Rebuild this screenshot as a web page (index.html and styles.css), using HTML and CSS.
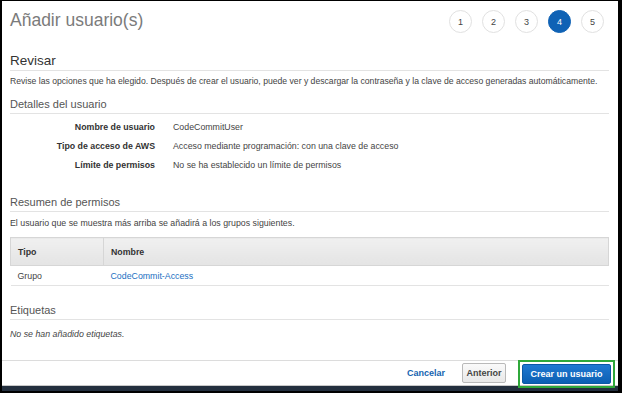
FILE: index.html
```html
<!DOCTYPE html>
<html lang="es">
<head>
<meta charset="utf-8">
<title>Añadir usuario(s)</title>
<link rel="stylesheet" href="styles.css">
</head>
<body>
<div class="window">
  <div class="content">
    <div class="page-header">
      <h1 class="title">Añadir usuario(s)</h1>
      <ol class="steps">
        <li class="step">1</li>
        <li class="step">2</li>
        <li class="step">3</li>
        <li class="step active">4</li>
        <li class="step">5</li>
      </ol>
    </div>

    <h2 class="section-title">Revisar</h2>
    <p class="text intro">Revise las opciones que ha elegido. Después de crear el usuario, puede ver y descargar la contraseña y la clave de acceso generadas automáticamente.</p>

    <h3 class="sub-title first">Detalles del usuario</h3>
    <dl class="details">
      <div class="detail-row"><dt>Nombre de usuario</dt><dd>CodeCommitUser</dd></div>
      <div class="detail-row"><dt>Tipo de acceso de AWS</dt><dd>Acceso mediante programación: con una clave de acceso</dd></div>
      <div class="detail-row"><dt>Límite de permisos</dt><dd>No se ha establecido un límite de permisos</dd></div>
    </dl>

    <h3 class="sub-title perms">Resumen de permisos</h3>
    <p class="text groups-note">El usuario que se muestra más arriba se añadirá a los grupos siguientes.</p>
    <table class="perm-table">
      <thead>
        <tr><th class="col-type">Tipo</th><th>Nombre</th></tr>
      </thead>
      <tbody>
        <tr><td>Grupo</td><td><a class="link" href="#">CodeCommit-Access</a></td></tr>
      </tbody>
    </table>

    <h3 class="sub-title tags">Etiquetas</h3>
    <p class="text empty">No se han añadido etiquetas.</p>
  </div>

  <div class="footer">
    <a class="cancel" href="#">Cancelar</a>
    <button class="btn btn-secondary">Anterior</button>
    <span class="highlight"><button class="btn btn-primary">Crear un usuario</button></span>
  </div>
</div>
<div class="bottom-bar"></div>
</body>
</html>
```

FILE: styles.css
```css
* { box-sizing: border-box; }

html, body {
  margin: 0;
  padding: 0;
  background: #000;
}

body {
  width: 622px;
  height: 393px;
  overflow: hidden;
  font-family: "Liberation Sans", Arial, sans-serif;
  color: #444;
}

.window {
  margin: 1px 4px 0 2px;
  height: 385px;
  background: #fff;
  display: flex;
  flex-direction: column;
  border-bottom: 1px solid #c9c9c9;
}

.content {
  flex: 1;
  padding: 0 9px 0 8px;
}

.page-header {
  height: 51px;
  display: flex;
  justify-content: space-between;
  align-items: flex-start;
}

.title {
  margin: 0;
  padding-top: 8px;
  font-size: 17.5px;
  line-height: 22px;
  font-weight: normal;
  color: #7b7b7b;
}

.steps {
  list-style: none;
  margin: 9px 5px 0 0;
  padding: 0;
  display: flex;
  gap: 10px;
}

.step {
  width: 23px;
  height: 23px;
  border-radius: 50%;
  border: 1px solid #e1e1e1;
  display: flex;
  align-items: center;
  justify-content: center;
  font-size: 9px;
  color: #444;
  background: #fff;
}

.step.active {
  background: #0f62b5;
  border-color: #0f62b5;
  color: #fff;
}

.section-title {
  margin: 0;
  font-size: 13.5px;
  line-height: 18px;
  font-weight: normal;
  color: #333;
  border-bottom: 1px solid #e3e3e3;
}

.text {
  margin: 0;
  font-size: 8.8px;
  line-height: 12px;
  color: #444;
}

.intro {
  margin-top: 4px;
  font-size: 8.65px;
  white-space: nowrap;
}

.sub-title {
  margin: 18px 0 0;
  font-size: 11px;
  line-height: 14px;
  font-weight: normal;
  color: #555;
  padding-bottom: 2px;
  border-bottom: 1px solid #e3e3e3;
}

.sub-title.first { margin-top: 10px; }
.sub-title.perms { margin-top: 21px; }
.sub-title.tags { margin-top: 17px; }

.details {
  margin: 3px 0 0;
}

.detail-row {
  display: flex;
  height: 19px;
  align-items: center;
  font-size: 8.8px;
}

.detail-row dt {
  width: 145px;
  text-align: right;
  font-weight: bold;
  color: #333;
}

.detail-row dd {
  margin: 0 0 0 18px;
  color: #444;
}

.groups-note { margin-top: 5px; }

.perm-table {
  margin-top: 8px;
  width: 100%;
  border-collapse: collapse;
  font-size: 8.8px;
}

.perm-table th {
  height: 28px;
  text-align: left;
  font-weight: bold;
  color: #333;
  padding: 0 7px;
  background: linear-gradient(#f0f0f0, #e4e4e4);
  border: 1px solid #d6d6d6;
}

.perm-table .col-type { width: 93px; }

.perm-table td {
  height: 20px;
  padding: 0 7px;
  border-bottom: 1px solid #e3e3e3;
  color: #444;
}

.link {
  color: #1a6fc2;
  text-decoration: none;
}

.empty {
  margin-top: 8px;
  font-style: italic;
}

.footer {
  height: 25px;
  border-top: 1px solid #dcdcdc;
  display: flex;
  align-items: center;
  justify-content: flex-end;
  padding-right: 3px;
}

.cancel {
  font-size: 9px;
  font-weight: bold;
  color: #1463b0;
  text-decoration: none;
  margin-right: 17px;
}

.btn {
  display: block;
  height: 20px;
  font-family: inherit;
  font-size: 9px;
  font-weight: bold;
  border-radius: 2px;
  padding: 0;
}

.btn-secondary {
  width: 44px;
  color: #444;
  background: linear-gradient(#fafafa, #e8e8e8);
  border: 1px solid #b9b9b9;
  margin-right: 12px;
}

.highlight {
  display: block;
  padding: 2px;
  border: 2px solid #2fa83a;
  position: relative;
  z-index: 2;
  margin-top: 2px;
}

.btn-primary {
  width: 89px;
  color: #fff;
  background: linear-gradient(#1f78d1, #0c5fb3);
  border: 1px solid #0b58a6;
}

.bottom-bar {
  margin: 0 4px 0 2px;
  height: 5px;
  background: #232f3e;
}
```
